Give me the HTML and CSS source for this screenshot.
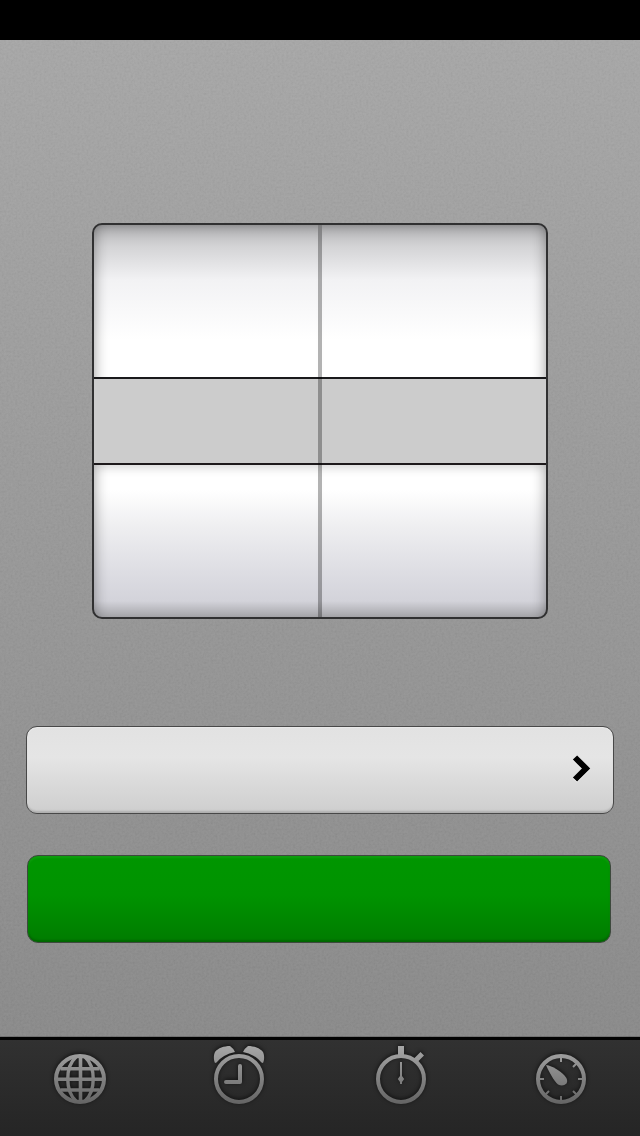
FILE: index.html
```
<!DOCTYPE html>
<html lang="en">
<head>
<meta charset="utf-8">
<title>Timer</title>
<link rel="stylesheet" href="styles.css">
</head>
<body>
<div class="screen">
  <svg class="grain" width="640" height="1096" aria-hidden="true">
    <filter id="noise" x="0" y="0" width="100%" height="100%">
      <feTurbulence type="fractalNoise" baseFrequency="0.45" numOctaves="2" seed="4"/>
      <feColorMatrix values="1 0 0 0 0  1 0 0 0 0  1 0 0 0 0  0 0 0 0 1"/>
    </filter>
    <rect width="640" height="1096" filter="url(#noise)"/>
  </svg>
  <header class="status"></header>
  <main class="content">
    <section class="picker" aria-label="Duration">
      <div class="wheel"></div>
      <div class="divider"></div>
      <div class="wheel"></div>
      <div class="selection"></div>
    </section>
    <button class="button option" aria-label="Sound">
      <svg width="24" height="32" viewBox="0 0 24 32">
        <path class="chevron-glow" d="M3 4.500 14 15.500 3 26.500"/>
        <path class="chevron" d="M3 3.500 14 14.500 3 25.500"/>
      </svg>
    </button>
    <button class="button start" aria-label="Start"></button>
  </main>
  <nav class="tabs">
    <a class="tab" aria-label="World clock">
      <svg class="icon" width="60" height="70" viewBox="0 0 60 70">
        <defs><linearGradient id="metal" gradientUnits="userSpaceOnUse" x1="0" y1="5" x2="0" y2="65"><stop offset="0" stop-color="#a8a8a8"/><stop offset="1" stop-color="#636363"/></linearGradient></defs>
        <ellipse class="line" stroke-width="4" cx="30" cy="39" rx="24" ry="23"/>
        <path class="line" stroke-width="3.600" d="M30.500 15V63M7 39.300H53M10.500 28.700H49.500M10.500 50H49.500"/>
        <path class="line" stroke-width="3.400" d="M26 17C15 27 15 51 26 61M35 17C46 27 46 51 35 61"/>
      </svg>
    </a>
    <a class="tab" aria-label="Alarm">
      <svg class="icon" width="60" height="70" viewBox="0 0 60 70">
        <circle class="line" cx="29" cy="39" r="23"/>
        <path class="line hands" d="M30 26V42H16"/>
        <path class="solid" d="M5 23C3.500 20 3.500 15 5 12C8 8 14 6 20 6Q23 8 25 12Q13 14.500 6.500 22.500ZM53 23C54.500 20 54.500 15 53 12C50 8 44 6 38 6Q35 8 33 12Q45 14.500 51.500 22.500Z"/>
      </svg>
    </a>
    <a class="tab" aria-label="Stopwatch">
      <svg class="icon" width="60" height="70" viewBox="0 0 60 70">
        <circle class="line" cx="31" cy="39" r="23"/>
        <path class="solid" d="M28 6H34V16H28ZM44 18.500 50.500 12 54 15.500 47.500 22ZM30 22H32V36L34.200 39 32 42V44H30V42L27.800 39 30 36Z"/>
      </svg>
    </a>
    <a class="tab" aria-label="Timer">
      <svg class="icon" width="60" height="70" viewBox="0 0 60 70">
        <circle class="line" cx="31" cy="39" r="23"/>
        <path class="line" stroke-width="2" d="M31 17V22M31 56V61M9 39H14M48 39H53M43 27 46.500 23.500M43 51 46.500 54.500M19 51 15.500 54.500"/>
        <path class="solid" d="M16 25C23 26 30 31 34.500 35.500Q38.500 40 36.500 43.500Q33 47 28 44.500C24 41 19 32 16 25Z"/>
      </svg>
    </a>
  </nav>
</div>
</body>
</html>
```
FILE: styles.css
```
body {
  margin: 0;
  font-family: "Liberation Sans", sans-serif;
}

.screen {
  position: relative;
  display: flex;
  flex-direction: column;
  width: 640px;
  height: 1136px;
  overflow: hidden;
  background: linear-gradient(#a6a6a6 40px, #888 1037px);
}

.grain {
  position: absolute;
  left: 0;
  top: 40px;
  opacity: 0.07;
}

.status {
  height: 40px;
  background: #000;
}

.content {
  position: relative;
  flex: 1;
  display: flex;
  flex-direction: column;
  padding: 183px 26px 0;
}

.picker {
  position: relative;
  box-sizing: border-box;
  display: flex;
  align-self: center;
  width: 456px;
  height: 396px;
  border: 2px solid #303031;
  border-radius: 10px;
  overflow: hidden;
  background: linear-gradient(#b4b4b6 0, #d4d4d6 22px, #f2f2f4 55px, #fff 115px, #fff 265px, #efeff1 300px, #dcdce2 350px, #d3d3da 376px, #a5a5a9 392px);
}

.wheel {
  flex: 1;
  margin: 0 -1px;
  clip-path: inset(0 1px);
}

.wheel:first-child {
  box-shadow: inset 14px 0 14px -12px rgba(0, 0, 0, 0.35), inset 0 12px 14px -12px rgba(0, 0, 0, 0.35);
}

.wheel:nth-child(3) {
  box-shadow: inset -14px 0 14px -12px rgba(0, 0, 0, 0.35), inset 0 12px 14px -12px rgba(0, 0, 0, 0.35);
}

.divider {
  position: relative;
  z-index: 2;
  width: 4px;
  background: rgba(0, 0, 0, 0.3);
}

.selection {
  position: absolute;
  left: 0;
  right: 0;
  top: 152px;
  height: 84px;
  border-top: 2px solid #19191b;
  border-bottom: 2px solid #1d191b;
  background: #ccc;
  box-shadow: 0 3px 9px rgba(0, 0, 0, 0.16);
  clip-path: inset(0 0 -15px);
}

.button {
  box-sizing: border-box;
  height: 88px;
  padding: 0;
  border: 1px solid #484848;
  border-radius: 11px;
}

.option {
  display: flex;
  align-items: center;
  justify-content: flex-end;
  margin-top: 107px;
  padding-right: 17px;
  background: linear-gradient(#e2e2e2, #e5e5e5 35%, #dadada 65%, #cecece);
  box-shadow: inset 0 -3px 2px -1px rgba(0, 0, 0, 0.16), inset 0 1px 1px #eaeaea;
}

.chevron,
.chevron-glow {
  fill: none;
  stroke: #000;
  stroke-width: 6;
}

.chevron-glow {
  stroke: #f7f7f7;
}

.start {
  width: 584px;
  margin: 41px 0 0 1px;
  border-color: #3d493d;
  background: linear-gradient(#009600, #009300 45%, #007c00);
  box-shadow: inset 0 2px 2px rgba(40, 175, 40, 0.35), inset 0 -2px 2px rgba(0, 65, 0, 0.35);
}

.tabs {
  position: relative;
  box-sizing: border-box;
  display: grid;
  grid-template-columns: repeat(4, 1fr);
  height: 99px;
  border-top: 3px solid #030303;
  background: linear-gradient(#313131, #252525);
}

.tabs::before {
  content: "";
  position: absolute;
  top: -4px;
  width: 100%;
  height: 1px;
  background: rgba(0, 0, 0, 0.18);
}

.tab {
  display: flex;
  justify-content: center;
  align-items: flex-start;
}

.icon {
  filter: drop-shadow(0 -1px 2px rgba(0, 0, 0, 0.65));
}

.line {
  fill: none;
  stroke: url(#metal);
}

circle.line,
.hands {
  stroke-width: 4;
}

.hands {
  stroke-linecap: round;
  stroke-linejoin: round;
}

.solid {
  fill: url(#metal);
}
```
